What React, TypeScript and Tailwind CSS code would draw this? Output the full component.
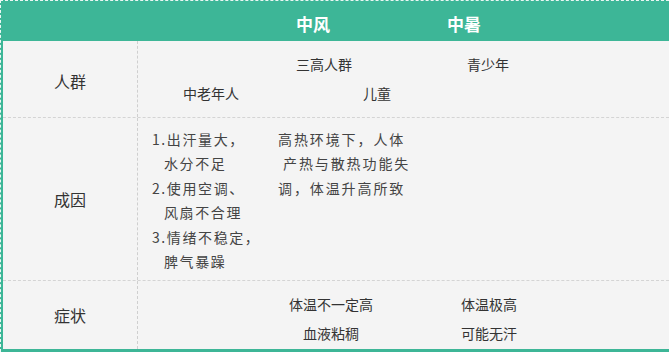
const font = { fontFamily: '"Noto Sans CJK SC", "Noto Sans", sans-serif' }

export default function App() {
  return (
    <div className="w-[669px] h-[352px] overflow-hidden bg-[#3db697]" style={font}>
      <div className="h-full border-t border-l border-dashed border-white/90 pl-[2px] pb-[2px]">
        {/* header */}
        <div className="h-[40px] flex items-center text-white font-bold text-[17px] pt-[6px]">
          <div className="w-[230px]" />
          <div className="w-[160px] text-center">中风</div>
          <div className="w-[142px] text-center">中暑</div>
        </div>

        <div className="bg-[#f4f4f4] text-[#333] h-[308px] flex flex-col">
          {/* 人群 */}
          <div className="h-[76px] flex">
            <div className="w-[135px] shrink-0 border-r border-dashed border-[#cfcfcf] flex items-center justify-center text-[16px] pt-[3px]">
              人群
            </div>
            <div className="flex-1 text-[14px] flex flex-col pt-[11px]">
              <div className="flex h-[24px] items-center">
                <div className="w-[158px]" />
                <div className="w-[171px]">三高人群</div>
                <div>青少年</div>
              </div>
              <div className="flex h-[28px] items-end">
                <div className="w-[45px]" />
                <div className="w-[180px]">中老年人</div>
                <div>儿童</div>
              </div>
            </div>
          </div>

          {/* 成因 */}
          <div className="h-[163px] flex border-t border-dashed border-[#d4d4d4]">
            <div className="w-[135px] shrink-0 border-r border-dashed border-[#cfcfcf] flex items-center justify-center text-[16px]">
              成因
            </div>
            <div className="flex-1 flex text-[14px] text-[#444] tracking-[1.6px] leading-[24.4px] pt-[9px]">
              <div className="w-[140px] pl-[14px]">
                <div>1.出汗量大，</div>
                <div className="pl-[12px]">水分不足</div>
                <div>2.使用空调、</div>
                <div className="pl-[12px]">风扇不合理</div>
                <div>3.情绪不稳定，</div>
                <div className="pl-[12px]">脾气暴躁</div>
              </div>
              <div className="tracking-[1.9px]">
                <div>高热环境下，人体</div>
                <div className="pl-[5px]">产热与散热功能失</div>
                <div>调，体温升高所致</div>
              </div>
            </div>
          </div>

          {/* 症状 */}
          <div className="flex-1 flex border-t border-dashed border-[#d4d4d4]">
            <div className="w-[135px] shrink-0 border-r border-dashed border-[#cfcfcf] flex items-center justify-center text-[16px]">
              症状
            </div>
            <div className="flex-1 flex text-[14px] pt-[9px]">
              <div className="w-[113px]" />
              <div className="w-[160px] text-center leading-[29px]">
                <div>体温不一定高</div>
                <div>血液粘稠</div>
              </div>
              <div className="w-[156px] text-center leading-[29px]">
                <div>体温极高</div>
                <div>可能无汗</div>
              </div>
            </div>
          </div>
        </div>
      </div>
    </div>
  )
}
